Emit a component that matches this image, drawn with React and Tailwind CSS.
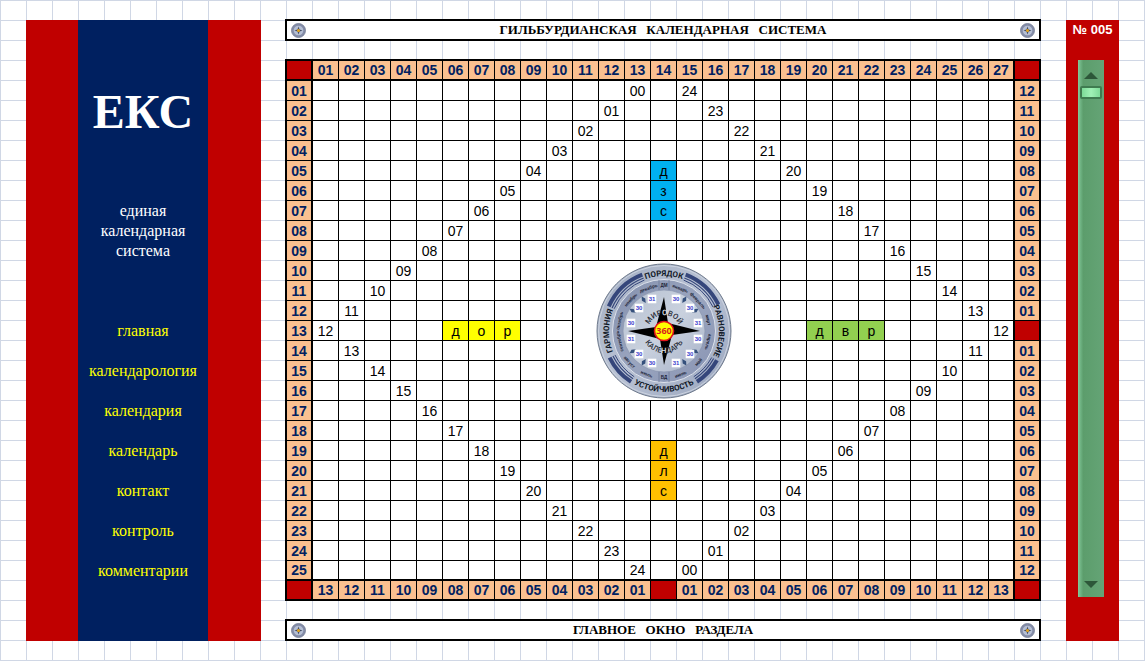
import React, { useState } from "react";

const pad = (n) => String(n).padStart(2, "0");
const range = (n) => Array.from({ length: n }, (_, i) => i + 1);

const COLUMNS = 27;
const ROWS = 25;
const MIDDLE_COL = 14;
const MIDDLE_ROW = 13;

const LETTERS = {
  "5-14": ["д", "bg-[#00b0f0]"],
  "6-14": ["з", "bg-[#00b0f0]"],
  "7-14": ["с", "bg-[#00b0f0]"],
  "13-6": ["д", "bg-[#ffff00]"],
  "13-7": ["о", "bg-[#ffff00]"],
  "13-8": ["р", "bg-[#ffff00]"],
  "13-20": ["д", "bg-[#92d050]"],
  "13-21": ["в", "bg-[#92d050]"],
  "13-22": ["р", "bg-[#92d050]"],
  "19-14": ["д", "bg-[#ffc000]"],
  "20-14": ["л", "bg-[#ffc000]"],
  "21-14": ["с", "bg-[#ffc000]"],
};

const MENU = ["главная", "календарология", "календария", "календарь", "контакт", "контроль", "комментарии"];

function diagonalValue(row, col) {
  const left = row <= MIDDLE_ROW ? MIDDLE_COL - row : row - 12;
  const right = row < MIDDLE_ROW ? MIDDLE_COL + row : 40 - row;
  if (col === left) return pad(row - 1);
  if (col === right) return pad(25 - row);
  return "";
}

const mirrored = (n, middle) => (n === middle ? "" : pad(Math.abs(n - middle)));

// Arc of a circle around the origin; angles run clockwise from the top.
function arc(radius, from, to) {
  const point = (deg) => {
    const rad = (deg * Math.PI) / 180;
    return `${(radius * Math.sin(rad)).toFixed(2)},${(-radius * Math.cos(rad)).toFixed(2)}`;
  };
  return `M${point(from)} A${radius},${radius} 0 0 1 ${point(to)}`;
}

const DAYS = [
  [12, -32, 30], [26, -23, 30], [34, -8, 31], [34, 8, 30], [26, 23, 30], [12, 32, 31],
  [-12, 32, 30], [-25, 23, 30], [-33, 8, 31], [-33, -8, 30], [-25, -23, 30], [-12, -32, 31],
];

const MONTHS_TOP = [[0, "ДМ"], [21, "январь"], [48, "февраль"], [76, "март"], [283, "октябрь"], [313, "ноябрь"], [340, "декабрь"], [257, "сентябрь"], [104, "апрель"]];
const MONTHS_BOTTOM = [[132, "май"], [159, "июнь"], [180, "ВД"], [202, "июль"], [228, "август"]];

const RIM_WORDS = [["outerTop", "ПОРЯДОК"], ["outerBottom", "УСТОЙЧИВОСТЬ"], ["outerLeft", "ГАРМОНИЯ"], ["outerRight", "РАВНОВЕСИЕ"]];

function Compass() {
  return (
    <svg viewBox="-68 -68 136 136" className="mx-auto block h-[136px] w-[136px]" role="img" aria-label="Мировой календарь">
      <defs>
        <linearGradient id="disc" x1="0" y1="0" x2="1" y2="1">
          <stop offset="0" stopColor="#a3aec2" />
          <stop offset="0.5" stopColor="#b9c2d4" />
          <stop offset="1" stopColor="#98a4bd" />
        </linearGradient>
        <linearGradient id="ring" x1="0" y1="0" x2="1" y2="1">
          <stop offset="0" stopColor="#8490ad" />
          <stop offset="0.5" stopColor="#9aa5bf" />
          <stop offset="1" stopColor="#8994b3" />
        </linearGradient>
        <linearGradient id="face" x1="0" y1="0" x2="1" y2="1">
          <stop offset="0" stopColor="#b7c1d1" />
          <stop offset="0.5" stopColor="#c9d1de" />
          <stop offset="1" stopColor="#a7b2c8" />
        </linearGradient>
        <path id="outerTop" d="M-55,0 A55,55 0 0 1 55,0" />
        <path id="outerBottom" d="M-61,0 A61,61 0 0 0 61,0" />
        <path id="outerLeft" d="M0,55 A55,55 0 0 1 0,-55" />
        <path id="outerRight" d="M0,-55 A55,55 0 0 1 0,55" />
        <path id="innerTop" d="M-16,0 A16,16 0 0 1 16,0" />
        <path id="innerBottom" d="M-22,0 A22,22 0 0 0 22,0" />
      </defs>
      <circle r="67" fill="url(#disc)" stroke="#6f7a8c" strokeWidth="1" />
      <circle r="65.5" fill="none" stroke="#ccd3df" strokeWidth="1" />
      <circle r="51.5" fill="url(#ring)" stroke="#dde2ec" strokeWidth="1" />
      <circle r="41" fill="url(#face)" stroke="#8995af" strokeWidth="0.7" />
      <path d="M-5,-51V-41M5,-51V-41M-5,51V41M5,51V41" stroke="#6c7898" strokeWidth="0.8" />
      {[[21, 64], [119, 147], [213, 244], [294, 339]].map(([from, to]) => (
        <g key={from} fill="none" stroke="#35467b">
          <path d={arc(60.5, from, to)} strokeWidth="4" />
          <path d={arc(56.8, from, to)} strokeWidth="1.2" />
          <path d={arc(54.6, from, to)} strokeWidth="1" />
        </g>
      ))}
      {RIM_WORDS.map(([id, word]) => (
        <text key={id} fontSize="8" fontWeight="700" fill="#111827" textAnchor="middle" fontFamily="Liberation Sans Narrow, Roboto, sans-serif">
          <textPath href={`#${id}`} startOffset="50%">{word}</textPath>
        </text>
      ))}
      {MONTHS_TOP.map(([a, name]) => (
        <text key={name} transform={`rotate(${a})`} y="-44" fontSize="4.6" fontWeight="700" fill="#1c2438" textAnchor="middle" fontFamily="Liberation Sans, sans-serif">{name}</text>
      ))}
      {MONTHS_BOTTOM.map(([a, name]) => (
        <text key={name} transform={`rotate(${a - 180})`} y="48" fontSize="4.6" fontWeight="700" fill="#1c2438" textAnchor="middle" fontFamily="Liberation Sans, sans-serif">{name}</text>
      ))}
      {[33, 57, 123, 147, 213, 237, 303, 327].map((a) => (
        <path key={a} transform={`rotate(${a})`} d="M0,-41 L2,-37.5 L0,-33.5 L-2,-37.5Z" fill="#35507c" />
      ))}
      <path d="M0,-34 L4,-8 L36,0 L8,4 L0,34 L-4,8 L-36,0 L-8,-4Z" fill="#000" />
      <g fontFamily="Roboto, sans-serif" fontSize="7.5" fontWeight="500" fill="#2a2e38" textAnchor="middle">
        <text><textPath href="#innerTop" startOffset="50%">МИР<tspan fill="#e4e8ef">О</tspan>ВОЙ</textPath></text>
        <text><textPath href="#innerBottom" startOffset="50%">КАЛЕ<tspan fill="#e4e8ef">Н</tspan>ДАРЬ</textPath></text>
      </g>
      {DAYS.map(([x, y, day], i) => (
        <g key={i} transform={`translate(${x} ${y})`}>
          <rect x="-4.3" y="-4.3" width="8.6" height="8.6" fill="#fff" />
          <text y="2.2" fontSize="6" fontWeight="700" fill="#3a40cc" textAnchor="middle" fontFamily="Liberation Sans, sans-serif">{day}</text>
        </g>
      ))}
      <circle r="9.5" fill="#ffff00" stroke="#e3131b" strokeWidth="1.6" />
      <text y="3.2" fontSize="9" fontWeight="700" fill="#d81e1e" textAnchor="middle" fontFamily="Open Sans, sans-serif">360</text>
    </svg>
  );
}

function Medallion() {
  return (
    <svg viewBox="0 0 15 15" className="h-[15px] w-[15px] shrink-0" aria-hidden="true">
      <circle cx="7.5" cy="7.5" r="7" fill="#848ca8" stroke="#737c93" strokeWidth="0.8" />
      <circle cx="7.5" cy="7.5" r="4.8" fill="#b5bfd4" />
      <path d="M7.5,3.5 L8.5,6.5 L11.5,7.5 L8.5,8.5 L7.5,11.5 L6.5,8.5 L3.5,7.5 L6.5,6.5Z" fill="#454d60" />
      <circle cx="7.5" cy="7.5" r="1.5" fill="#e5a51c" />
    </svg>
  );
}

function TitleBar({ as: Tag, children }) {
  return (
    <div className="flex h-[22px] items-center justify-between border-2 border-black bg-white px-1">
      <Medallion />
      <Tag className="whitespace-pre font-['Liberation_Serif',serif] text-[13px] leading-[18px] font-bold">{children}</Tag>
      <Medallion />
    </div>
  );
}

function HeadCell({ value, scope, edge }) {
  return (
    <th scope={scope} className={`h-5 border-black p-0 leading-[18px] font-bold text-[#002060] ${value ? "bg-[#fac090]" : "bg-[#c00000]"} ${edge}`}>
      {value}
    </th>
  );
}

function CalendarGrid() {
  return (
    <table className="w-full table-fixed border-separate border-spacing-0 border-t-2 border-l-2 border-black bg-white text-center text-[14px] text-black">
      <thead>
        <tr>
          <HeadCell value="" edge="border-r-2 border-b-2" />
          {range(COLUMNS).map((c) => (
            <HeadCell key={c} scope="col" value={pad(c)} edge={c === COLUMNS ? "border-r-2 border-b-2" : "border-r border-b-2"} />
          ))}
          <HeadCell value="" edge="border-r-2 border-b-2" />
        </tr>
      </thead>
      <tbody>
        {range(ROWS).map((r) => {
          const bottom = r === ROWS ? "border-b-2" : "border-b";
          return (
            <tr key={r}>
              <HeadCell scope="row" value={pad(r)} edge={`border-r-2 ${bottom}`} />
              {range(COLUMNS).map((c) => {
                if (r >= 10 && r <= 16 && c >= 11 && c <= 17) {
                  return r === 10 && c === 11 ? (
                    <td key={c} rowSpan={7} colSpan={7} className="border-r border-b border-black p-0 align-middle">
                      <Compass />
                    </td>
                  ) : null;
                }
                const [letter, color] = LETTERS[`${r}-${c}`] || ["", ""];
                return (
                  <td key={c} className={`h-5 border-black p-0 leading-[18px] ${c === COLUMNS ? "border-r-2" : "border-r"} ${bottom} ${color}`}>
                    {letter || diagonalValue(r, c)}
                  </td>
                );
              })}
              <HeadCell scope="row" value={mirrored(r, MIDDLE_ROW)} edge={`border-r-2 ${bottom}`} />
            </tr>
          );
        })}
      </tbody>
      <tfoot>
        <tr>
          <HeadCell value="" edge="border-r-2 border-b-2" />
          {range(COLUMNS).map((c) => (
            <HeadCell key={c} scope="col" value={mirrored(c, MIDDLE_COL)} edge={c === COLUMNS ? "border-r-2 border-b-2" : "border-r border-b-2"} />
          ))}
          <HeadCell value="" edge="border-r-2 border-b-2" />
        </tr>
      </tfoot>
    </table>
  );
}

function Scroller() {
  const [value, setValue] = useState(0);
  const move = (step) => setValue((v) => Math.min(100, Math.max(0, v + step)));
  return (
    <div className="ml-3 flex w-[26px] flex-1 flex-col self-start bg-linear-to-r from-[#82c99a] via-[#5c9d6c] via-20% to-[#65a476]">
      <button type="button" aria-label="Вверх" onClick={() => move(-1)} className="flex h-[26px] items-center justify-center pt-1">
        <svg viewBox="0 0 14 7" className="h-[7px] w-[14px]" aria-hidden="true"><path d="M7,0 L14,7 H0Z" fill="#2d5739" /></svg>
      </button>
      <div className="flex min-h-0 flex-1 px-0.5">
        <input
          type="range"
          aria-label="Номер окна"
          min="0"
          max="100"
          value={value}
          onChange={(e) => setValue(Number(e.target.value))}
          className="m-0 w-[22px] appearance-none bg-transparent [writing-mode:vertical-lr] [&::-webkit-slider-thumb]:h-[13px] [&::-webkit-slider-thumb]:w-[22px] [&::-webkit-slider-thumb]:appearance-none [&::-webkit-slider-thumb]:rounded-[2px] [&::-webkit-slider-thumb]:border-2 [&::-webkit-slider-thumb]:border-[#3f7c50] [&::-webkit-slider-thumb]:bg-linear-to-r [&::-webkit-slider-thumb]:from-[#7ddb98] [&::-webkit-slider-thumb]:via-[#a0f2b6] [&::-webkit-slider-thumb]:to-[#7ddb98]"
        />
      </div>
      <button type="button" aria-label="Вниз" onClick={() => move(1)} className="flex h-[26px] items-center justify-center">
        <svg viewBox="0 0 14 7" className="h-[7px] w-[14px]" aria-hidden="true"><path d="M0,0 H14 L7,7Z" fill="#2d5739" /></svg>
      </button>
    </div>
  );
}

export default function App() {
  return (
    <div className="flex min-h-screen items-start bg-white bg-[linear-gradient(to_right,#d0d7e5_1px,transparent_1px),linear-gradient(to_bottom,#d0d7e5_1px,transparent_1px)] bg-[size:26px_20px] px-[26px] pt-[19px] pb-5 font-['Liberation_Sans',Arial,sans-serif]">
      <div className="flex min-w-0 flex-1 items-stretch">
        <aside className="mt-px mr-6 shrink-0 bg-[#c00000] pr-[53px] pl-[52px]">
          <div className="h-full w-[130px] bg-[#002060] pt-[60px] pb-[50px] text-center font-['Liberation_Serif',serif] text-[16px] text-white">
            <h1 className="text-[48px] leading-[64px] font-bold">ЕКС</h1>
            <p className="mt-[57px] leading-5">
              единая<br />календарная<br />система
            </p>
            <nav className="mt-[50px] flex flex-col leading-10 text-[#ffff00]">
              {MENU.map((item) => (
                <a key={item} href="#">{item}</a>
              ))}
            </nav>
          </div>
        </aside>
        <main className="flex min-w-0 flex-1 flex-col gap-[18px]">
          <TitleBar as="h2">{"ГИЛЬБУРДИАНСКАЯ   КАЛЕНДАРНАЯ   СИСТЕМА"}</TitleBar>
          <CalendarGrid />
          <TitleBar as="h3">{"ГЛАВНОЕ   ОКНО   РАЗДЕЛА"}</TitleBar>
        </main>
        <aside className="mt-px ml-[25px] flex w-[53px] shrink-0 flex-col items-center bg-[#c00000] pb-11">
          <div className="h-10 text-[13px] leading-5 font-bold text-white">№ 005</div>
          <Scroller />
        </aside>
      </div>
    </div>
  );
}
